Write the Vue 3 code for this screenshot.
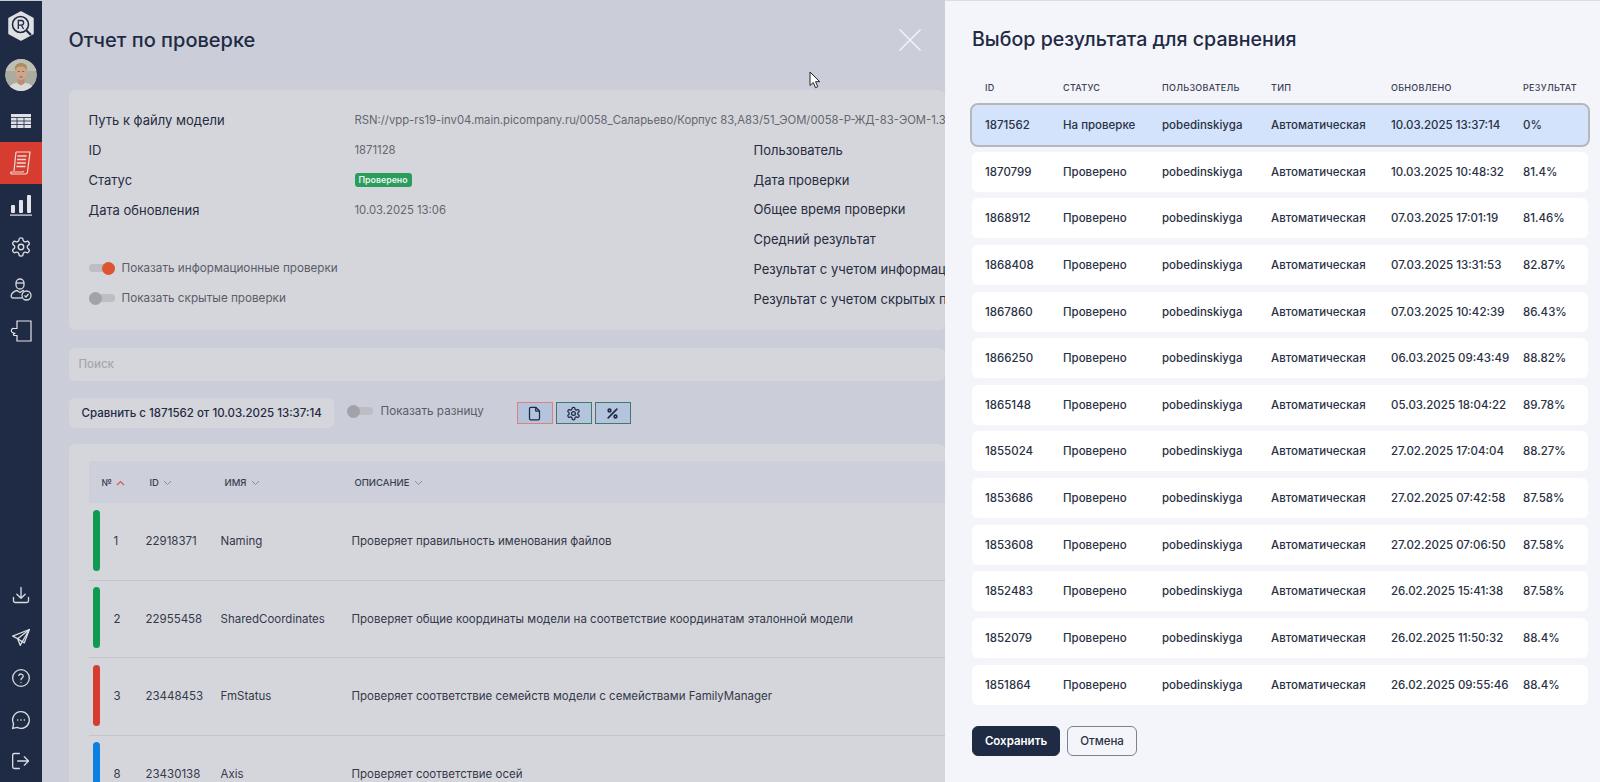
<script setup>
// строки таблицы проверок
const checks = [
  { color: 'green', num: 1, id: '22918371', name: 'Naming', desc: 'Проверяет правильность именования файлов' },
  { color: 'green', num: 2, id: '22955458', name: 'SharedCoordinates', desc: 'Проверяет общие координаты модели на соответствие координатам эталонной модели' },
  { color: 'red', num: 3, id: '23448453', name: 'FmStatus', desc: 'Проверяет соответствие семейств модели с семействами FamilyManager' },
  { color: 'blue', num: 8, id: '23430138', name: 'Axis', desc: 'Проверяет соответствие осей' },
]

// результаты для сравнения
const results = [
  ['1871562', 'На проверке', '10.03.2025 13:37:14', '0%'],
  ['1870799', 'Проверено', '10.03.2025 10:48:32', '81.4%'],
  ['1868912', 'Проверено', '07.03.2025 17:01:19', '81.46%'],
  ['1868408', 'Проверено', '07.03.2025 13:31:53', '82.87%'],
  ['1867860', 'Проверено', '07.03.2025 10:42:39', '86.43%'],
  ['1866250', 'Проверено', '06.03.2025 09:43:49', '88.82%'],
  ['1865148', 'Проверено', '05.03.2025 18:04:22', '89.78%'],
  ['1855024', 'Проверено', '27.02.2025 17:04:04', '88.27%'],
  ['1853686', 'Проверено', '27.02.2025 07:42:58', '87.58%'],
  ['1853608', 'Проверено', '27.02.2025 07:06:50', '87.58%'],
  ['1852483', 'Проверено', '26.02.2025 15:41:38', '87.58%'],
  ['1852079', 'Проверено', '26.02.2025 11:50:32', '88.4%'],
  ['1851864', 'Проверено', '26.02.2025 09:55:46', '88.4%'],
]

const gearPath = 'M12.22 2h-.44a2 2 0 0 0-2 2v.18a2 2 0 0 1-1 1.73l-.43.25a2 2 0 0 1-2 0l-.15-.08a2 2 0 0 0-2.73.73l-.22.38a2 2 0 0 0 .73 2.73l.15.1a2 2 0 0 1 1 1.72v.51a2 2 0 0 1-1 1.74l-.15.09a2 2 0 0 0-.73 2.73l.22.38a2 2 0 0 0 2.73.73l.15-.08a2 2 0 0 1 2 0l.43.25a2 2 0 0 1 1 1.73V20a2 2 0 0 0 2 2h.44a2 2 0 0 0 2-2v-.18a2 2 0 0 1 1-1.73l.43-.25a2 2 0 0 1 2 0l.15.08a2 2 0 0 0 2.73-.73l.22-.39a2 2 0 0 0-.73-2.73l-.15-.08a2 2 0 0 1-1-1.74v-.5a2 2 0 0 1 1-1.74l.15-.09a2 2 0 0 0 .73-2.73l-.22-.38a2 2 0 0 0-2.73-.73l-.15.08a2 2 0 0 1-2 0l-.43-.25a2 2 0 0 1-1-1.73V4a2 2 0 0 0-2-2z'
</script>

<template>
  <div class="app">
    <aside class="sidebar">
      <div class="logo">
        <svg width="28" height="30" viewBox="0 0 28 30">
          <path d="M14 1l12 6.500v15L14 29 2 22.500v-15z" fill="#dfe0e4" stroke="#dfe0e4" stroke-width="1.500" stroke-linejoin="round" />
          <circle cx="13.500" cy="13.500" r="8" fill="none" stroke="#1f2a44" stroke-width="1.600" />
          <path d="M19.500 19.500l4.500 4.500" stroke="#1f2a44" stroke-width="2.200" />
          <path d="M11.300 18v-8.500h3a2.300 2.300 0 0 1 0 4.700h-3M14.500 14.200l2 3.800" fill="none" stroke="#1f2a44" stroke-width="1.300" />
        </svg>
      </div>
      <div class="avatar">
        <svg width="32" height="32" viewBox="0 0 32 32">
          <circle cx="16" cy="16" r="16" fill="#a9ac9f" />
          <path d="M0 0h32v12H0z" fill="#bdbfb4" />
          <path d="M3 32c0-6 6-8.500 13-8.500S29 26 29 32z" fill="#d9dadc" />
          <path d="M12.500 19h7v5.500l-3.500 2-3.500-2z" fill="#b98f78" />
          <ellipse cx="16" cy="13" rx="6" ry="8" fill="#cfa58c" />
          <path d="M10 12c-1-6 2.500-8 6-8s7 2 6 8c-.8-3-2.500-4.500-6-4.500S10.800 9 10 12z" fill="#a78f5c" />
          <path d="M12.800 12.500h2M17.200 12.500h2M14.500 18h3" stroke="#6b5445" stroke-width=".8" />
        </svg>
      </div>
      <nav class="nav">
        <a class="nav-item">
          <svg width="22" height="16" viewBox="0 0 22 16" fill="#dfe1e6">
            <path d="M1 1h20v14H1z" />
            <path d="M1 4.500h20M1 8h20M1 11.500h20M7 4.500V15M14 4.500V15" stroke="#1f2a44" stroke-width=".8" />
          </svg>
        </a>
        <a class="nav-item active">
          <svg width="22" height="24" viewBox="0 0 22 24" fill="none" stroke="#f1d9d5" stroke-width="1.200">
            <path d="M6 1h14l-2.500 20c-.2 1.300-1 2-2 2H2c-1 0-1.500-1-1-2h12l.5-1" />
            <path d="M6 1L4 20" />
            <path d="M7.500 5h9M7 8.500h9M6.800 12h9M6.400 15.500h9" stroke-width="1.600" />
          </svg>
        </a>
        <a class="nav-item">
          <svg width="22" height="22" viewBox="0 0 22 22" fill="#e3e4e8">
            <rect x="1" y="11" width="4" height="8" rx="1" />
            <rect x="9" y="6" width="4" height="13" rx="1" />
            <rect x="17" y="1" width="4" height="18" rx="1" />
            <rect x="0" y="20.500" width="22" height="1.200" />
          </svg>
        </a>
        <a class="nav-item">
          <svg width="22" height="22" viewBox="0 0 24 24" fill="none" stroke="#d9dbe1" stroke-width="1.500">
            <path :d="gearPath" />
            <circle cx="12" cy="12" r="3" />
          </svg>
        </a>
        <a class="nav-item">
          <svg width="22" height="24" viewBox="0 0 22 24" fill="none" stroke="#d9dbe1" stroke-width="1.300">
            <path d="M6 6a4 4 0 0 1 8 0v2a4 4 0 0 1-8 0z" />
            <path d="M6 6h8" />
            <path d="M3 21c-2 0-2-2-1.500-3.500C2.500 15 5 14 7 13.500l3 2 3-2 1 .3" />
            <path d="M3 21h9" />
            <circle cx="16.500" cy="18.500" r="4.500" />
            <path d="M14.500 18.500l1.500 1.500 2.500-3" />
          </svg>
        </a>
        <a class="nav-item">
          <svg width="24" height="24" viewBox="0 0 24 24" fill="none" stroke="#e3e4e8" stroke-width="1.200">
            <path d="M8 2h14v20H8v-5.500H5.500c-1.500 0-1.500-2 0-2l-.5-.5c-3 .5-4-5 0-4.500H8z" />
          </svg>
        </a>
      </nav>
      <div class="nav-bottom">
        <a class="nav-item small">
          <svg width="20" height="20" viewBox="0 0 24 24" fill="none" stroke="#d9dbe1" stroke-width="1.600" stroke-linecap="round" stroke-linejoin="round">
            <path d="M3 15v4a2 2 0 0 0 2 2h14a2 2 0 0 0 2-2v-4" />
            <path d="M12 3v12M7 11l5 5 5-5" />
          </svg>
        </a>
        <a class="nav-item small">
          <svg width="20" height="20" viewBox="0 0 24 24" fill="none" stroke="#d9dbe1" stroke-width="1.600" stroke-linejoin="round">
            <path d="M22 3L2 11l6 3 3 8z" />
            <path d="M22 3L8 14l3 2 5 3z" />
          </svg>
        </a>
        <a class="nav-item small">
          <svg width="20" height="20" viewBox="0 0 24 24" fill="none" stroke="#d9dbe1" stroke-width="1.600" stroke-linecap="round">
            <circle cx="12" cy="12" r="10" />
            <path d="M9.300 9a2.800 2.800 0 0 1 5.400 1c0 1.800-2.700 2.300-2.700 4" />
            <path d="M12 17.500h.01" />
          </svg>
        </a>
        <a class="nav-item small">
          <svg width="20" height="20" viewBox="0 0 24 24" fill="none" stroke="#d9dbe1" stroke-width="1.600" stroke-linecap="round">
            <path d="M12 2a10 10 0 1 1-4.600 18.900L2 22l1.100-5.400A10 10 0 0 1 12 2z" />
            <path d="M8 12h.01M12 12h.01M16 12h.01" stroke-width="2" />
          </svg>
        </a>
        <a class="nav-item small">
          <svg width="20" height="20" viewBox="0 0 24 24" fill="none" stroke="#d9dbe1" stroke-width="1.600" stroke-linecap="round" stroke-linejoin="round">
            <path d="M10 21H4a2 2 0 0 1-2-2V5a2 2 0 0 1 2-2h6" />
            <path d="M16 17l5-5-5-5M21 12H8" />
          </svg>
        </a>
      </div>
    </aside>

    <main class="report">
      <h1 class="title">Отчет по проверке</h1>

      <section class="info card">
        <div class="info-row">
          <span class="label">Путь к файлу модели</span>
          <span class="value nowrap">RSN://vpp-rs19-inv04.main.picompany.ru/0058_Саларьево/Корпус 83,А83/51_ЭОМ/0058-Р-ЖД-83-ЭОМ-1.3.rvt</span>
        </div>
        <div class="info-cols">
          <div class="info-left">
            <div class="info-row">
              <span class="label">ID</span>
              <span class="value">1871128</span>
            </div>
            <div class="info-row">
              <span class="label">Статус</span>
              <span class="badge">Проверено</span>
            </div>
            <div class="info-row">
              <span class="label">Дата обновления</span>
              <span class="value">10.03.2025 13:06</span>
            </div>
            <div class="toggles">
              <label class="toggle-row">
                <span class="toggle on"><i /></span>
                Показать информационные проверки
              </label>
              <label class="toggle-row">
                <span class="toggle"><i /></span>
                Показать скрытые проверки
              </label>
            </div>
          </div>
          <div class="info-right">
            <span class="label">Пользователь</span>
            <span class="label">Дата проверки</span>
            <span class="label">Общее время проверки</span>
            <span class="label">Средний результат</span>
            <span class="label">Результат с учетом информационных проверок</span>
            <span class="label">Результат с учетом скрытых проверок</span>
          </div>
        </div>
      </section>

      <div class="search card">Поиск</div>

      <div class="toolbar">
        <div class="compare card">Сравнить с 1871562 от 10.03.2025 13:37:14</div>
        <label class="toggle-row diff">
          <span class="toggle"><i /></span>
          Показать разницу
        </label>
        <div class="tool-buttons">
          <button class="tool-btn current">
            <svg width="15" height="15" viewBox="0 0 24 24" fill="none" stroke="#1f2a44" stroke-width="2" stroke-linejoin="round">
              <path d="M14 2H6a2 2 0 0 0-2 2v16a2 2 0 0 0 2 2h12a2 2 0 0 0 2-2V8z" />
              <path d="M14 2v6h6" />
            </svg>
          </button>
          <button class="tool-btn">
            <svg width="15" height="15" viewBox="0 0 24 24" fill="none" stroke="#1f2a44" stroke-width="2">
              <path :d="gearPath" />
              <circle cx="12" cy="12" r="3" />
            </svg>
          </button>
          <button class="tool-btn">
            <svg width="13" height="13" viewBox="0 0 24 24" fill="none" stroke="#1f2a44" stroke-width="3" stroke-linecap="round">
              <path d="M20 4L4 20" />
              <circle cx="6.500" cy="6.500" r="2.500" />
              <circle cx="17.500" cy="17.500" r="2.500" />
            </svg>
          </button>
        </div>
      </div>

      <section class="checks card">
        <div class="checks-head">
          <span>№
            <svg width="9" height="6" viewBox="0 0 9 6" fill="none" stroke="#d9534a" stroke-width="1.100"><path d="M1 5l3.500-3.500L8 5" /></svg>
          </span>
          <span>ID
            <svg width="9" height="6" viewBox="0 0 9 6" fill="none" stroke="#8a8e9c" stroke-width="1"><path d="M1 1l3.500 3.500L8 1" /></svg>
          </span>
          <span>ИМЯ
            <svg width="9" height="6" viewBox="0 0 9 6" fill="none" stroke="#8a8e9c" stroke-width="1"><path d="M1 1l3.500 3.500L8 1" /></svg>
          </span>
          <span>ОПИСАНИЕ
            <svg width="9" height="6" viewBox="0 0 9 6" fill="none" stroke="#8a8e9c" stroke-width="1"><path d="M1 1l3.500 3.500L8 1" /></svg>
          </span>
        </div>
        <div v-for="check in checks" :key="check.id" class="check-row">
          <span class="bar" :class="check.color" />
          <span>{{ check.num }}</span>
          <span>{{ check.id }}</span>
          <span>{{ check.name }}</span>
          <span class="nowrap">{{ check.desc }}</span>
        </div>
      </section>

      <button class="close" aria-label="Закрыть">
        <svg width="24" height="24" viewBox="0 0 24 24" stroke="#f4f5f8" stroke-width="1.400">
          <path d="M1.500 1.500l21 21M22.500 1.500l-21 21" />
        </svg>
      </button>
      <svg class="cursor" width="12" height="18" viewBox="0 0 12 18">
        <path d="M1 1v13.500l3.200-3 2.300 5.200 2.300-1-2.300-5h4.300z" fill="#fff" stroke="#222" stroke-width="1" />
      </svg>
    </main>

    <aside class="drawer">
      <h2 class="drawer-title">Выбор результата для сравнения</h2>
      <div class="result-head">
        <span>ID</span>
        <span>Статус</span>
        <span>Пользователь</span>
        <span>Тип</span>
        <span>Обновлено</span>
        <span>Результат</span>
      </div>
      <div class="result-list">
        <div
          v-for="(row, i) in results"
          :key="row[0]"
          class="result-row"
          :class="{ selected: i === 0 }"
        >
          <span>{{ row[0] }}</span>
          <span>{{ row[1] }}</span>
          <span>pobedinskiyga</span>
          <span>Автоматическая</span>
          <span class="date">{{ row[2] }}</span>
          <span>{{ row[3] }}</span>
        </div>
      </div>
      <div class="actions">
        <button class="btn primary">Сохранить</button>
        <button class="btn">Отмена</button>
      </div>
    </aside>
  </div>
</template>

<style>
html,
body {
  margin: 0;
  overflow: hidden;
}
</style>

<style scoped>
.app {
  display: flex;
  height: 782px;
  overflow: hidden;
  font-family: Inter, "Noto Sans", sans-serif;
  color: #2d3445;
  background: #cbced8;
}

.sidebar {
  flex: 0 0 41.500px;
  display: flex;
  flex-direction: column;
  background: #1f2a44;
  border-top: 1px solid #c9cbd2;
  box-sizing: border-box;
}

.logo {
  display: flex;
  justify-content: center;
  padding-top: 10px;
  height: 29px;
}

.avatar {
  display: flex;
  justify-content: center;
  margin-top: 19px;
  height: 32px;
}

.avatar svg {
  border-radius: 50%;
}

.nav {
  margin-top: 9px;
}

.nav-item {
  display: flex;
  align-items: center;
  justify-content: center;
  height: 42px;
}

.nav-item.active {
  background: #d63d30;
}

.nav-bottom {
  margin-top: auto;
}

.nav-item.small {
  height: 41.500px;
}

.report {
  flex: 1;
  min-width: 0;
  position: relative;
  padding-left: 27px;
  overflow: hidden;
}

.title {
  margin: 28px 0 0;
  font-size: 20px;
  line-height: 24px;
  font-weight: 500;
  color: #1f2a44;
}

.card {
  background: #d5d6dc;
  border-radius: 6px;
}

.info {
  margin-top: 38px;
  height: 240px;
  padding: 15px 0 0 20px;
  box-sizing: border-box;
  overflow: hidden;
}

.info-row {
  display: flex;
  align-items: center;
  height: 30px;
}

.info-row .label {
  flex: 0 0 266px;
}

.label {
  font-size: 13px;
  color: #252c40;
}

.value {
  font-size: 11.300px;
  color: #63666f;
}

.nowrap {
  white-space: nowrap;
}

.badge {
  padding: 1px 4px;
  border-radius: 3px;
  background: #2a9d5c;
  color: #e9f3ed;
  font-size: 8.800px;
  font-weight: 600;
  line-height: 12px;
}

.info-cols {
  display: flex;
}

.info-left {
  flex: 0 0 665px;
}

.info-right {
  display: flex;
  flex-direction: column;
  padding-top: 1px;
  white-space: nowrap;
  line-height: 29.700px;
}

.toggles {
  margin-top: 28px;
}

.toggle-row {
  display: flex;
  align-items: center;
  gap: 7px;
  height: 30px;
  font-size: 11.700px;
  color: #5a5d68;
  white-space: nowrap;
}

.toggle {
  position: relative;
  width: 26px;
  height: 8px;
  border-radius: 4px;
  background: #bcbdc5;
}

.toggle i {
  position: absolute;
  left: 0;
  top: -2.500px;
  width: 13px;
  height: 13px;
  border-radius: 50%;
  background: #a2a3aa;
}

.toggle.on i {
  left: 13px;
  background: #dc5530;
}

.search {
  margin-top: 18px;
  height: 33px;
  padding-left: 10px;
  line-height: 33px;
  font-size: 11.500px;
  font-weight: 500;
  color: #a5a6ae;
}

.toolbar {
  display: flex;
  align-items: center;
  margin-top: 17px;
  height: 30px;
}

.compare {
  flex: 0 0 265px;
  box-sizing: border-box;
  padding-left: 13px;
  height: 30px;
  line-height: 30px;
  font-size: 11.500px;
  font-weight: 500;
  color: #1f2a44;
  white-space: nowrap;
}

.diff {
  margin: 0 0 4px 13px;
  gap: 8px;
}

.tool-buttons {
  display: flex;
  gap: 3px;
  margin-left: 33px;
}

.tool-btn {
  display: flex;
  align-items: center;
  justify-content: center;
  width: 36px;
  height: 22px;
  padding: 0;
  box-sizing: border-box;
  background: #b3c4dc;
  border: 1px solid #3f7a6c;
}

.tool-btn.current {
  border-color: #e07f7f;
}

.checks {
  margin-top: 16px;
  padding: 17px 0 0 20px;
  height: 400px;
  box-sizing: border-box;
}

.checks-head,
.check-row {
  display: grid;
  grid-template-columns: 25px 32px 75px 131px 1fr;
  align-items: center;
}

.checks-head {
  grid-template-columns: 48px 75px 130px 1fr;
  height: 42px;
  padding-left: 13px;
  background: #cdd0da;
  font-size: 9.500px;
  font-weight: 500;
  color: #3a3f50;
}

.checks-head svg {
  margin-left: 2px;
}

.check-row {
  height: 76.500px;
  font-size: 11.500px;
  color: #34384a;
  border-bottom: 1px solid #c5c6cc;
}

.bar {
  justify-self: start;
  margin: 0 0 2px 4.500px;
  width: 6.500px;
  height: 61px;
  border-radius: 4px;
}

.bar.green {
  background: #109a51;
}

.bar.red {
  background: #d63d30;
}

.bar.blue {
  background: #0b80e0;
}

.close {
  position: absolute;
  left: 856px;
  top: 28px;
  width: 24px;
  height: 24px;
  padding: 0;
  background: none;
  border: none;
}

.cursor {
  position: absolute;
  left: 767.500px;
  top: 71px;
}

.drawer {
  flex: 0 0 655px;
  box-sizing: border-box;
  padding: 26px 12px 0 27px;
  background: #f4f5fa;
  border-top: 1px solid #dcdde2;
  display: flex;
  flex-direction: column;
}

.drawer-title {
  margin: 0;
  font-size: 19.600px;
  line-height: 24px;
  font-weight: 500;
  color: #1f2a44;
}

.result-head,
.result-row {
  display: grid;
  grid-template-columns: 78px 99px 109px 120px 132px 1fr;
  padding-left: 13px;
  align-items: center;
  white-space: nowrap;
}

.result-head {
  margin-top: 27px;
  height: 18px;
  font-size: 9px;
  font-weight: 500;
  letter-spacing: 0.3px;
  text-transform: uppercase;
  color: #3a4052;
}

.result-list {
  display: flex;
  flex-direction: column;
  gap: 6.640px;
  margin-top: 9px;
}

.result-row {
  height: 40px;
  background: #fff;
  border-radius: 6px;
  font-size: 11.500px;
  font-weight: 500;
  color: #2a3144;
}

.result-row .date {
  overflow: hidden;
}

.result-row.selected {
  background: #d2e3fb;
  outline: 2px solid #b5b7bc;
  outline-offset: 0;
}

.actions {
  display: flex;
  gap: 7px;
  margin-top: 21px;
}

.btn {
  height: 30px;
  width: 70px;
  padding: 0;
  font-family: inherit;
  font-size: 11.500px;
  font-weight: 500;
  color: #2a3144;
  background: transparent;
  border: 1px solid #7c8190;
  border-radius: 6px;
}

.btn.primary {
  width: 88px;
  color: #fff;
  font-weight: 600;
  background: #1f2a44;
  border-color: #1f2a44;
}
</style>
